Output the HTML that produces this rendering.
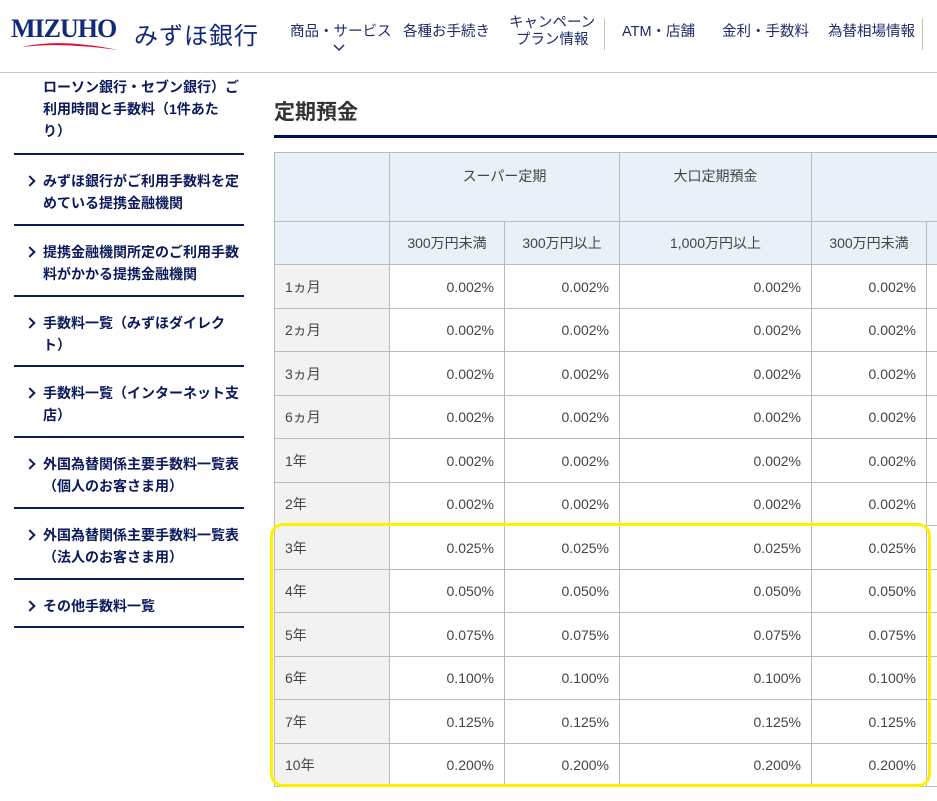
<!DOCTYPE html>
<html><head><meta charset="utf-8"><style>
*{margin:0;padding:0;box-sizing:border-box}
body{width:937px;height:801px;overflow:hidden;background:#fff;font-family:"Liberation Sans","Noto Sans CJK JP",sans-serif;position:relative;color:#333}
.hdr{position:absolute;left:0;top:0;width:937px;height:73px;border-bottom:1px solid #ccc}
.logo{position:absolute;left:11px;top:14px;font-family:"Liberation Serif",serif;font-weight:bold;font-size:26px;color:#132a7a;letter-spacing:-1px;white-space:nowrap}
.swoosh{position:absolute;left:20px;top:40px}
.bank{position:absolute;left:134px;top:16px;font-size:24px;color:#132a7a;letter-spacing:1px;white-space:nowrap}
.nav{position:absolute;font-size:14.5px;color:#1e2a6b;line-height:17px;text-align:center;white-space:nowrap}
.sep{position:absolute;width:1px;background:#c8bfb0;top:18px;height:32px}
.item{position:absolute;left:14px;width:230px;border-top:2px solid #0b1a5c;font-size:14px;font-weight:bold;color:#0b1a5c;line-height:22px;padding-left:29px;padding-right:2px}
.item:before{content:"";position:absolute;left:12px;top:22px;width:6px;height:6px;border-right:2px solid #0b1a5c;border-top:2px solid #0b1a5c;transform:rotate(45deg)}
.item.na:before{display:none}
h1{position:absolute;left:274px;top:96px;font-size:21px;font-weight:bold;color:#333}
.rule{position:absolute;left:274px;top:135px;width:663px;height:3px;background:#0b0b5c}
table{position:absolute;left:274px;top:152px;width:692px;border-collapse:collapse;table-layout:fixed;font-size:14px;color:#444}
td,th{border:1px solid #bbb;font-weight:normal}
th{background:#e9f0f8;text-align:center}
td{text-align:right;padding-right:10px}
td.l{text-align:left;background:#f2f2f2;padding-left:10px}
.hl{position:absolute;left:270px;top:523px;width:661px;height:264px;border:3px solid #fff000;border-radius:13px}
</style></head><body>
<div class="hdr">
<div class="logo">MIZUHO</div>
<svg class="swoosh" width="100" height="12" viewBox="0 0 100 12"><path d="M2 7 Q40 -2 98 10 Q40 2 2 7Z" fill="#e0102f"/></svg>
<div class="bank">みずほ銀行</div>
<div class="nav" style="left:290px;top:24px">商品・サービス</div>
<svg style="position:absolute;left:333px;top:44px" width="12" height="8"><path d="M1 1 L6 6 L11 1" stroke="#1e2a6b" stroke-width="1.5" fill="none"/></svg>
<div class="nav" style="left:403px;top:24px">各種お手続き</div>
<div class="nav" style="left:509px;top:15px">キャンペーン<br>プラン情報</div>
<div class="sep" style="left:604px"></div>
<div class="nav" style="left:622px;top:24px">ATM・店舗</div>
<div class="nav" style="left:722px;top:24px">金利・手数料</div>
<div class="nav" style="left:828px;top:24px">為替相場情報</div>
<div class="sep" style="left:922px"></div>
</div>
<div class="item na" style="top:76px;border-top:none">ローソン銀行・セブン銀行）ご<br>利用時間と手数料（1件あた<br>り）</div>
<div class="item" style="top:153px;height:71px;padding-top:15px">みずほ銀行がご利用手数料を定めている提携金融機関</div>
<div class="item" style="top:224px;height:71px;padding-top:15px">提携金融機関所定のご利用手数料がかかる提携金融機関</div>
<div class="item" style="top:295px;height:70px;padding-top:15px">手数料一覧（みずほダイレク<br>ト）</div>
<div class="item" style="top:365px;height:71px;padding-top:15px">手数料一覧（インターネット支<br>店）</div>
<div class="item" style="top:436px;height:71px;padding-top:15px">外国為替関係主要手数料一覧表<br>（個人のお客さま用）</div>
<div class="item" style="top:507px;height:71px;padding-top:15px">外国為替関係主要手数料一覧表<br>（法人のお客さま用）</div>
<div class="item" style="top:578px;height:50px;padding-top:15px;border-bottom:2px solid #0b1a5c">その他手数料一覧</div>
<h1>定期預金</h1>
<div class="rule"></div>
<table>
<colgroup><col style="width:115px"><col style="width:115px"><col style="width:115px"><col style="width:192px"><col style="width:115px"><col style="width:40px"></colgroup>
<tr style="height:69px"><th></th><th colspan="2" style="vertical-align:top;padding-top:13px">スーパー定期</th><th style="vertical-align:top;padding-top:13px">大口定期預金</th><th colspan="2"></th></tr>
<tr style="height:43px"><th></th><th>300万円未満</th><th>300万円以上</th><th>1,000万円以上</th><th>300万円未満</th><th></th></tr>
<tr style="height:44px"><td class="l">1ヵ月</td><td>0.002%</td><td>0.002%</td><td>0.002%</td><td>0.002%</td><td></td></tr>
<tr style="height:43px"><td class="l">2ヵ月</td><td>0.002%</td><td>0.002%</td><td>0.002%</td><td>0.002%</td><td></td></tr>
<tr style="height:44px"><td class="l">3ヵ月</td><td>0.002%</td><td>0.002%</td><td>0.002%</td><td>0.002%</td><td></td></tr>
<tr style="height:43px"><td class="l">6ヵ月</td><td>0.002%</td><td>0.002%</td><td>0.002%</td><td>0.002%</td><td></td></tr>
<tr style="height:44px"><td class="l">1年</td><td>0.002%</td><td>0.002%</td><td>0.002%</td><td>0.002%</td><td></td></tr>
<tr style="height:43px"><td class="l">2年</td><td>0.002%</td><td>0.002%</td><td>0.002%</td><td>0.002%</td><td></td></tr>
<tr style="height:44px"><td class="l">3年</td><td>0.025%</td><td>0.025%</td><td>0.025%</td><td>0.025%</td><td></td></tr>
<tr style="height:43px"><td class="l">4年</td><td>0.050%</td><td>0.050%</td><td>0.050%</td><td>0.050%</td><td></td></tr>
<tr style="height:44px"><td class="l">5年</td><td>0.075%</td><td>0.075%</td><td>0.075%</td><td>0.075%</td><td></td></tr>
<tr style="height:43px"><td class="l">6年</td><td>0.100%</td><td>0.100%</td><td>0.100%</td><td>0.100%</td><td></td></tr>
<tr style="height:44px"><td class="l">7年</td><td>0.125%</td><td>0.125%</td><td>0.125%</td><td>0.125%</td><td></td></tr>
<tr style="height:43px"><td class="l">10年</td><td>0.200%</td><td>0.200%</td><td>0.200%</td><td>0.200%</td><td></td></tr>
</table>
<div class="hl"></div>
</body></html>
